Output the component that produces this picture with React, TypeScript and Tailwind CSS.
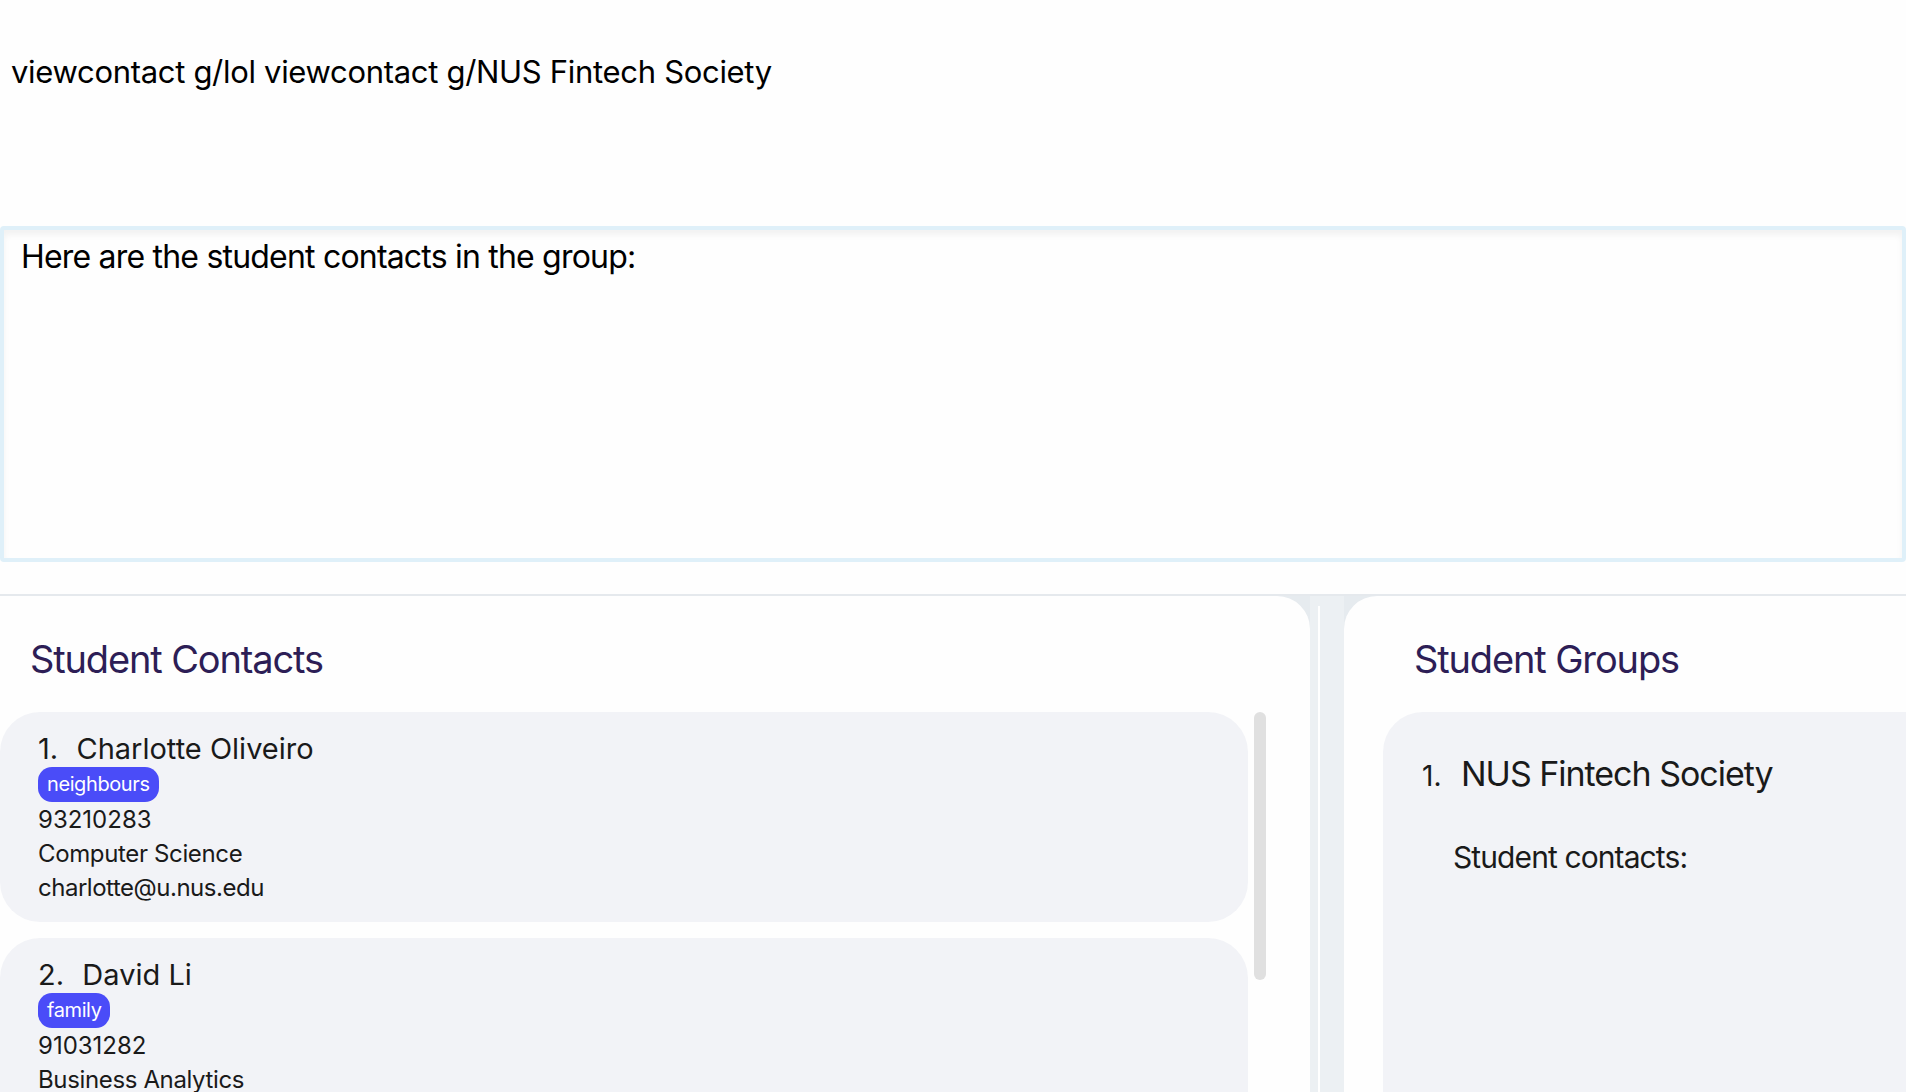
import React from "react";

const contacts = [
  { n: 1, name: "Charlotte Oliveiro", tag: "neighbours", phone: "93210283", major: "Computer Science", email: "charlotte@u.nus.edu" },
  { n: 2, name: "David Li", tag: "family", phone: "91031282", major: "Business Analytics", email: "lidavid@u.nus.edu" },
];

export default function App() {
  return (
    <div className="w-[1906px] h-[1092px] overflow-hidden bg-[#fefefe] flex flex-col font-['Inter',sans-serif] text-black">
      {/* command area */}
      <div className="h-[226px] shrink-0 pl-[11px] pt-[53px]">
        <div className="text-[31px] leading-[38px] tracking-[-0.01em]">viewcontact g/lol viewcontact g/NUS Fintech Society</div>
      </div>
      {/* result box */}
      <div className="h-[336px] shrink-0 border-[4px] border-[#dff0f9] rounded-[4px] shadow-[inset_0_5px_6px_rgba(0,0,0,0.05)] pl-[17px] pt-[7px]">
        <div className="text-[32px] leading-[40px] tracking-[-0.025em]">Here are the student contacts in the group:</div>
      </div>
      <div className="h-[32px] shrink-0" />
      <div className="h-[2px] shrink-0 bg-[#e5e9ed]" />
      {/* panels */}
      <div className="flex-1 min-h-0 flex bg-[#e6ebef]">
        <div className="w-[1310px] shrink-0 bg-[#fefefe] rounded-tr-[33px] flex flex-col overflow-hidden">
          <div className="pl-[30px] pt-[40px] h-[116px] shrink-0 text-[38px] leading-[46px] tracking-[-0.03em] text-[#2d1e56]">Student Contacts</div>
          <div className="flex flex-1 min-h-0">
            <div className="w-[1248px] shrink-0 flex flex-col gap-[16px]">
              {contacts.map((c) => (
                <div key={c.n} className="bg-[#f2f3f7] rounded-[40px] pl-[38px] pt-[20px] pb-[17px] text-[#1a1a1a]">
                  <div className="flex text-[29px] leading-[34px]">
                    <span className="whitespace-pre pr-[2px]">{`${c.n}.  `}</span>
                    <span>{c.name}</span>
                  </div>
                  <div className="flex">
                    <span className="mt-[1px] h-[35px] px-[9px] rounded-[14px] bg-[#4a4cf8] text-white text-[20px] leading-[35px] tracking-[-0.02em]">{c.tag}</span>
                  </div>
                  <div className="text-[24px] leading-[34px] mt-[1px]">{c.phone}</div>
                  <div className="text-[24px] leading-[34px] tracking-[-0.015em]">{c.major}</div>
                  <div className="text-[24px] leading-[34px] tracking-[-0.02em]">{c.email}</div>
                </div>
              ))}
            </div>
            <div className="w-[18px] shrink-0 pl-[6px]">
              <div className="w-[12px] h-[268px] rounded-full bg-[#e0e0e0]" />
            </div>
          </div>
        </div>
        <div className="w-[34px] shrink-0 bg-[#ecf0f3] pl-[8px] pt-[10px]">
          <div className="w-[2px] h-full bg-white" />
        </div>
        <div className="flex-1 min-w-0 bg-[#fefefe] rounded-tl-[33px] flex flex-col overflow-hidden">
          <div className="pl-[70px] pt-[40px] h-[116px] shrink-0 text-[38px] leading-[46px] tracking-[-0.03em] text-[#2d1e56]">Student Groups</div>
          <div className="flex-1 min-h-0 pl-[39px]">
            <div className="h-full bg-[#f2f3f7] rounded-tl-[40px] pl-[39px] pt-[42px] text-[#1a1a1a]">
              <div className="flex items-baseline">
                <span className="text-[28px] leading-[40px] w-[39px]">1.</span>
                <span className="text-[34px] leading-[40px] tracking-[-0.03em]">NUS Fintech Society</span>
              </div>
              <div className="pl-[31px] mt-[43px] text-[30px] leading-[36px] tracking-[-0.03em]">Student contacts:</div>
            </div>
          </div>
        </div>
      </div>
    </div>
  );
}
